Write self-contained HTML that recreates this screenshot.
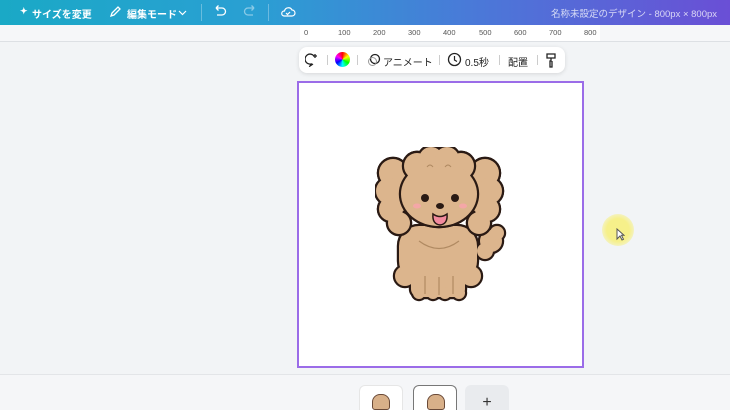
<!DOCTYPE html>
<html><head><meta charset="utf-8"><style>
*{margin:0;padding:0;box-sizing:border-box}
html,body{width:730px;height:410px;overflow:hidden}
body{background:#f2f4f6;font-family:"Liberation Sans","Noto Sans CJK JP",sans-serif;position:relative}
.hdr{position:absolute;left:0;top:0;width:730px;height:25px;background:linear-gradient(90deg,#1aa9c6 0%,#2a9fd3 35%,#4a79d8 65%,#6a4fd6 100%);color:#fff;font-size:10px;font-weight:bold}
.hdr span{position:absolute;top:6px}
.ruler{position:absolute;left:0;top:25px;width:730px;height:17px;background:#f6f7f9;border-bottom:1px solid #dde0e4}
.ruler .r{position:absolute;left:300px;top:0;width:300px;height:16px;background:#fff}
.ruler span{position:absolute;top:3px;font-size:7.5px;color:#555}
.tb{position:absolute;left:299px;top:47px;width:266px;height:26px;background:#fff;border-radius:8px;box-shadow:0 1px 4px rgba(0,0,0,.12);font-size:10px;color:#222}
.tb span{position:absolute;top:7px}
.sep{position:absolute;top:8px;width:1px;height:10px;background:#ccc}
.page{position:absolute;left:297px;top:81px;width:287px;height:287px;background:#fff;border:2px solid #9b6ce8}
.bot{position:absolute;left:0;top:374px;width:730px;height:36px;background:#f5f6f8;border-top:1px solid #e3e5e8}
.th{position:absolute;top:385px;width:44px;height:25px;border-radius:6px 6px 0 0;background:#fff}
</style></head><body>
<div class="hdr">
<span style="left:20px;font-size:9px">✦</span>
<span style="left:32px">サイズを変更</span>
<svg style="position:absolute;left:108px;top:5px" width="14" height="14" viewBox="0 0 14 14"><path d="M3 11l1-3 6-6 2 2-6 6z" fill="none" stroke="#fff" stroke-width="1.3"/></svg>
<span style="left:127px">編集モード</span>
<svg style="position:absolute;left:178px;top:8px" width="9" height="9" viewBox="0 0 9 9"><path d="M1 3l3.5 3.5L8 3" fill="none" stroke="#fff" stroke-width="1.2"/></svg>
<div style="position:absolute;left:201px;top:4px;width:1px;height:17px;background:rgba(255,255,255,.3)"></div>
<svg style="position:absolute;left:212px;top:5px" width="16" height="14" viewBox="0 0 16 14"><path d="M4 3h6a3.5 3.5 0 010 7H5M4 3l2.5-2.5M4 3l2.5 2.5" fill="none" stroke="#fff" stroke-width="1.3"/></svg>
<svg style="position:absolute;left:242px;top:5px;opacity:.45" width="16" height="14" viewBox="0 0 16 14"><path d="M12 3H6a3.5 3.5 0 000 7h5M12 3L9.5.5M12 3L9.5 5.5" fill="none" stroke="#fff" stroke-width="1.3"/></svg>
<div style="position:absolute;left:268px;top:4px;width:1px;height:17px;background:rgba(255,255,255,.3)"></div>
<svg style="position:absolute;left:280px;top:5px" width="16" height="14" viewBox="0 0 16 14"><path d="M4 11h8a3 3 0 000-6 4 4 0 00-7.5 1A2.5 2.5 0 004 11zM6 8l1.5 1.5L10 7" fill="none" stroke="#fff" stroke-width="1.2"/></svg>
<span style="left:551px;font-weight:normal;font-size:9.5px;opacity:.75">名称未設定のデザイン - 800px × 800px</span>
</div>
<div class="ruler"><div class="r"></div>
<span style="left:304px">0</span><span style="left:338px">100</span><span style="left:373px">200</span><span style="left:408px">300</span><span style="left:443px">400</span><span style="left:479px">500</span><span style="left:514px">600</span><span style="left:549px">700</span><span style="left:584px">800</span>
</div>
<div class="tb">
<svg style="position:absolute;left:6px;top:6px" width="14" height="14" viewBox="0 0 14 14"><path d="M9 3A5 5 0 106 11l-1 2 3-2M10 1v4M8 3h4" fill="none" stroke="#222" stroke-width="1.3"/></svg>
<div class="sep" style="left:28px"></div>
<div style="position:absolute;left:36px;top:5px;width:15px;height:15px;border-radius:50%;background:conic-gradient(red,yellow,lime,cyan,blue,magenta,red)"></div>
<div class="sep" style="left:58px"></div>
<svg style="position:absolute;left:68px;top:6px" width="14" height="14" viewBox="0 0 14 14"><circle cx="8" cy="6" r="4.5" fill="none" stroke="#222" stroke-width="1.3"/><circle cx="5.5" cy="8.5" r="4" fill="none" stroke="#999" stroke-width="1"/></svg>
<span style="left:84px">アニメート</span>
<div class="sep" style="left:140px"></div>
<svg style="position:absolute;left:148px;top:5px" width="15" height="15" viewBox="0 0 15 15"><circle cx="7.5" cy="7.5" r="6" fill="none" stroke="#222" stroke-width="1.3"/><path d="M7.5 4v4l2.5 1.5" fill="none" stroke="#222" stroke-width="1.2"/></svg>
<span style="left:166px">0.5秒</span>
<div class="sep" style="left:200px"></div>
<span style="left:209px">配置</span>
<div class="sep" style="left:238px"></div>
<svg style="position:absolute;left:246px;top:5px" width="12" height="16" viewBox="0 0 12 16"><path d="M2 2h8v4H2zM6 6v3h-1v6h2V9" fill="none" stroke="#222" stroke-width="1.3"/></svg>
</div>
<div class="page">
<svg style="position:absolute;left:76px;top:64px" width="134" height="156" viewBox="376 146 134 156">
<defs>
<g id="tail"><circle cx="492" cy="240" r="11"/><circle cx="486" cy="250" r="8"/><circle cx="498" cy="232" r="7"/></g>
<g id="body"><rect x="400" y="225" width="78" height="55" rx="20"/><circle cx="406" cy="275" r="10"/><circle cx="472" cy="275" r="10"/><rect x="412" y="260" width="54" height="36" rx="8"/><circle cx="420" cy="292" r="6"/><circle cx="434" cy="292" r="6"/><circle cx="446" cy="292" r="6"/><circle cx="460" cy="292" r="6"/></g>
<g id="ears"><circle cx="394" cy="172" r="14"/><circle cx="390" cy="190" r="13"/><circle cx="392" cy="208" r="12"/><circle cx="400" cy="222" r="11"/><circle cx="402" cy="195" r="15"/><circle cx="486" cy="172" r="14"/><circle cx="490" cy="190" r="13"/><circle cx="488" cy="208" r="12"/><circle cx="480" cy="222" r="11"/><circle cx="478" cy="195" r="15"/></g>
<g id="head"><circle cx="418" cy="165" r="13"/><circle cx="432" cy="158" r="12"/><circle cx="448" cy="158" r="12"/><circle cx="462" cy="165" r="13"/><ellipse cx="440" cy="193" rx="38" ry="32"/></g>
</defs>
<g fill="#2a1a14" stroke="#2a1a14" stroke-width="4.4"><use href="#tail"/><use href="#body"/><use href="#ears"/><use href="#head"/></g>
<g fill="#dcb58d"><use href="#tail"/><use href="#body"/></g>
<g fill="#2a1a14" stroke="#2a1a14" stroke-width="4.4"><use href="#ears"/><use href="#head"/></g>
<g fill="#dcb58d"><use href="#ears"/></g>
<g fill="#2a1a14" stroke="#2a1a14" stroke-width="4.4"><use href="#head"/></g>
<g fill="#dcb58d"><use href="#head"/></g>
<circle cx="426" cy="197" r="4" fill="#2a1a14"/><circle cx="456" cy="197" r="4" fill="#2a1a14"/>
<ellipse cx="418" cy="205" rx="4" ry="2.5" fill="#f4a7a7"/><ellipse cx="464" cy="205" rx="4" ry="2.5" fill="#f4a7a7"/>
<ellipse cx="441" cy="205" rx="4" ry="3" fill="#2a1a14"/>
<path d="M434 213q7 5 14 0q1 10-7 11q-8-1-7-11z" fill="#f28a9e" stroke="#2a1a14" stroke-width="1.5"/>
<path d="M420 240q20 15 40 0M426 275v18M440 276v18M454 275v18" stroke="#b08a62" stroke-width="1.2" fill="none"/>
<path d="M428 166q3-4 6 0M446 166q3-4 6 0" stroke="#b08a62" stroke-width="1" fill="none"/>
</svg>
</div>
<div style="position:absolute;left:602px;top:214px;width:32px;height:32px;border-radius:50%;background:radial-gradient(circle,#f6f08a 50%,rgba(246,240,138,.3) 80%,rgba(246,240,138,0) 100%)"></div>
<svg style="position:absolute;left:616px;top:228px" width="9" height="13" viewBox="0 0 9 13"><path d="M1 1v10l3-3 2 4 1.5-.7-2-4H8z" fill="#fff" stroke="#555" stroke-width="1"/></svg>
<div class="bot"></div>
<div class="th" style="left:359px;border:1px solid #e6e6e6;border-bottom:none"></div>
<div class="th" style="left:413px;border:1.5px solid #777;border-bottom:none"></div>
<div class="th" style="left:465px;background:#e9ebee;font-size:16px;color:#333;text-align:center;line-height:36px;overflow:hidden">+</div>
<div style="position:absolute;left:372px;top:394px;width:18px;height:16px;border-radius:8px 8px 3px 3px;background:#d8b089;border:1px solid #6a4a38"></div>
<div style="position:absolute;left:427px;top:394px;width:18px;height:16px;border-radius:8px 8px 3px 3px;background:#d8b089;border:1px solid #6a4a38"></div>
</body></html>
